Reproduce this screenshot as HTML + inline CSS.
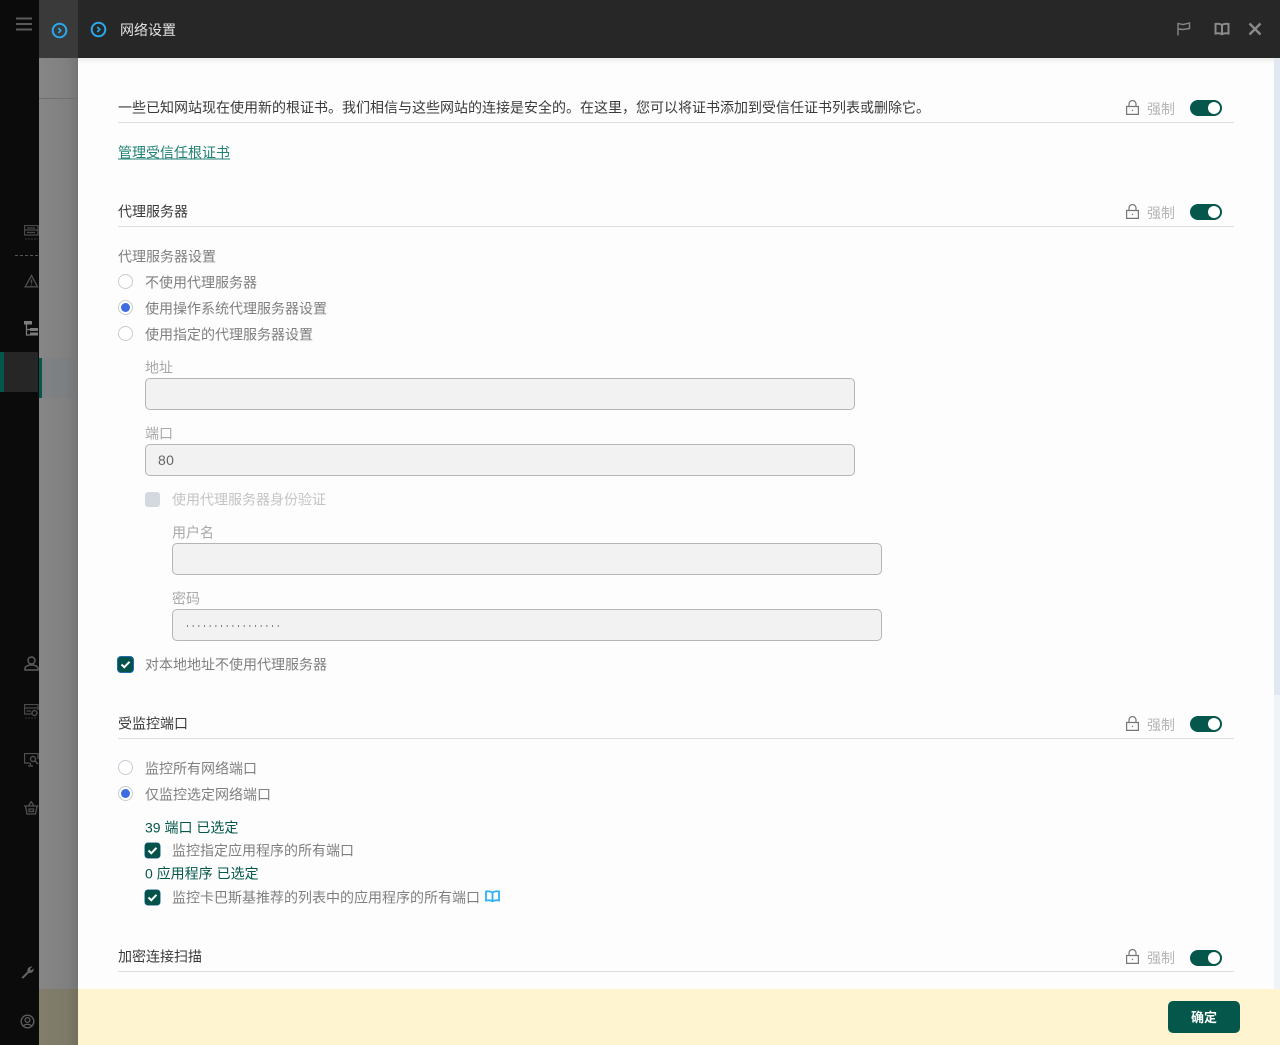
<!DOCTYPE html>
<html lang="zh-CN"><head><meta charset="utf-8"><title>网络设置</title>
<style>
html,body{margin:0;padding:0}
body{width:1280px;height:1045px;position:relative;overflow:hidden;background:#fdfdfd;font-family:"Liberation Sans","Noto Sans CJK SC",sans-serif;font-size:14px;color:#444}
.a,.t,.l,.i,.rb,.cb,svg{position:absolute}
.t{white-space:nowrap;line-height:20px;height:20px;transform:translateY(.5px);will-change:transform}
.t.k{transform:none;will-change:auto}
.h{color:#3a3a3a;left:118px}
.g{color:#7f7f7f}
.f{color:#a8a8a8}
.l{left:118px;width:1116px;height:1px;background:#dedede}
.i{height:30px;background:#f2f2f2;border:1px solid #b5b5b5;border-radius:5px}
.rb{left:118px;width:13px;height:13px;border:1px solid #c5ccd3;border-radius:50%;background:#fff}
.rb.on::after{content:"";position:absolute;left:2px;top:2px;width:9px;height:9px;border-radius:50%;background:#3d6be0}
.cb{width:15px;height:15px;border-radius:3px;background:#04534a;box-shadow:0 0 0 0.5px #1a5f9a}
.cb svg{left:2px;top:2px}
.tg{position:absolute;left:1190px;width:32px;height:16px;border-radius:8px;background:#04574a}
.tg::after{content:"";position:absolute;left:18px;top:2px;width:12px;height:12px;border-radius:50%;background:#fff}
.teal{color:#04574a}
</style></head><body>
<!-- sidebar -->
<div class="a" style="left:0;top:0;width:39px;height:1045px;background:#0b0b0b"></div>
<div class="a" style="left:0;top:352px;width:38px;height:40px;background:#262626"></div>
<div class="a" style="left:0;top:352px;width:4px;height:40px;background:#04574a"></div>
<!-- backdrop panel -->
<div class="a" style="left:39px;top:58px;width:39px;height:987px;background:linear-gradient(90deg,#868686,#808080 70%,#747474)"></div>
<div class="a" style="left:39px;top:98px;width:39px;height:1px;background:#6f6f6f"></div>
<div class="a" style="left:39px;top:358px;width:39px;height:40px;background:linear-gradient(90deg,#808385,#7c7f81 70%,#727476)"></div>
<div class="a" style="left:39px;top:358px;width:3px;height:40px;background:#04574a"></div>
<!-- header -->
<div class="a" style="left:0;top:0;width:39px;height:58px;background:#0b0b0b"></div>
<div class="a" style="left:39px;top:0;width:1241px;height:58px;background:#272727"></div>
<div class="a" style="left:39px;top:0;width:39px;height:58px;background:#3a3a3a"></div>
<div class="a" style="left:78px;top:58px;width:1196px;height:6px;background:linear-gradient(#ececec,#fdfdfd)"></div>
<!-- scrollbar -->
<div class="a" style="left:1274px;top:58px;width:6px;height:931px;background:#f0f3f7"></div>
<div class="a" style="left:1274px;top:58px;width:6px;height:637px;background:#e2e8f0"></div>

<svg style="left:15px;top:17px" width="18" height="14"><path d="M1 1.500H17M1 7H17M1 12.500H17" stroke="#5a5a5a" stroke-width="2"/></svg>
<svg style="left:51px;top:22px" width="17" height="17" viewBox="0 0 17 17" fill="none"><circle cx="8.500" cy="8.500" r="6.800" stroke="#29a8ec" stroke-width="2"/><path d="M7.300 6l2.500 2.500-2.500 2.500" stroke="#29a8ec" stroke-width="1.600"/></svg>
<svg style="left:90px;top:21px" width="17" height="17" viewBox="0 0 17 17" fill="none"><circle cx="8.500" cy="8.500" r="6.800" stroke="#29a8ec" stroke-width="2"/><path d="M7.300 6l2.500 2.500-2.500 2.500" stroke="#29a8ec" stroke-width="1.600"/></svg>
<div class="t k" style="left:120px;top:20px;color:#e2e2e2">网络设置</div>
<svg style="left:1176px;top:21px" width="16" height="16" viewBox="0 0 16 16" fill="none"><path d="M2 14.500V2.500L7 3.500L13.500 2V7.500L7 8.500L2 8" stroke="#868686" stroke-width="1.400"/></svg>
<svg style="left:1214px;top:22px" width="16" height="14" viewBox="0 0 16 14" fill="none"><path d="M8 3C6.500 2 4 1.500 1.500 2V11.500C4 11 6.500 11.300 8 12.300C9.500 11.300 12 11 14.500 11.500V2C12 1.500 9.500 2 8 3ZM8 3V12.300" stroke="#8a8a8a" stroke-width="2"/></svg>
<svg style="left:1248px;top:22px" width="14" height="14" viewBox="0 0 14 14"><path d="M1.500 1.500L12.500 12.500M12.500 1.500L1.500 12.500" stroke="#8a8a8a" stroke-width="2.400"/></svg>

<!-- sidebar icons -->
<svg style="left:24px;top:225px" width="15" height="16" viewBox="0 0 15 16" fill="none"><path d="M.5.500H14V10H.5ZM.5 5H14M3 3H11M3 7.500H11" stroke="#4a4a4a" stroke-width="1.300"/><path d="M1 14H14" stroke="#3a3a3a" stroke-dasharray="2 1"/></svg>
<div class="a" style="left:15px;top:255px;width:23px;border-top:1px dashed #555"></div>
<svg style="left:24px;top:274px" width="15" height="14" viewBox="0 0 15 14" fill="none"><path d="M7.500 1.500L13.500 12.800H1.200ZM7.500 5.500V9.500M7.500 10.500V11.500" stroke="#4c4c4c" stroke-width="1.400"/></svg>
<svg style="left:24px;top:321px" width="15" height="15" viewBox="0 0 15 15" fill="none"><path d="M0 0H8V3.500H0ZM6 7H14V10H6ZM6 11.500H14V14.500H6Z" fill="#7d7d7d"/><path d="M2.500 3.500V14H6M2.500 8.500H6" stroke="#7d7d7d" stroke-width="1.300"/></svg>
<svg style="left:24px;top:656px" width="15" height="15" viewBox="0 0 15 15" fill="none"><circle cx="7.500" cy="4.500" r="3.500" stroke="#5c5c5c" stroke-width="1.500"/><path d="M1 14V12C1 10.500 4 9.500 5.500 9H9.500C11 9.500 14 10.500 14 12V14Z" stroke="#5c5c5c" stroke-width="1.500"/></svg>
<svg style="left:24px;top:704px" width="15" height="15" viewBox="0 0 15 15" fill="none"><path d="M8 10H.5V.5H14V6M.5 4H14M2.500 7H7" stroke="#4a4a4a" stroke-width="1.200"/><circle cx="10.500" cy="9" r="2.500" stroke="#4a4a4a" stroke-width="1.500"/><path d="M1 14H13" stroke="#333" stroke-dasharray="2 1"/></svg>
<svg style="left:24px;top:753px" width="15" height="15" viewBox="0 0 15 15" fill="none"><path d="M6 10H.5V.5H14V6M4 13H9M6.500 10V13" stroke="#4f4f4f" stroke-width="1.300"/><circle cx="9" cy="6" r="2.500" stroke="#4f4f4f" stroke-width="1.500"/><path d="M11 8L14 11" stroke="#4f4f4f" stroke-width="1.500"/></svg>
<svg style="left:24px;top:801px" width="15" height="14" viewBox="0 0 15 14" fill="none"><path d="M0 5H14.500M1.500 5L3 13H11.500L13 5M4.500 5L7.200 .5L10 5M5 8H9.500V10.500H5Z" stroke="#505050" stroke-width="1.300"/></svg>
<svg style="left:20px;top:964px" width="15" height="15" viewBox="0 0 15 15"><path d="M1.500 13.500L7.500 7.500C6.800 5 8.800 2 12.500 2.500L10 5L11 6.500L13.800 4.500C14 8 11 9.500 9 8.800L3 14.800Z" fill="#666"/></svg>
<svg style="left:20px;top:1014px" width="15" height="15" viewBox="0 0 15 15" fill="none"><circle cx="7.500" cy="7.500" r="6.300" stroke="#5c5c5c" stroke-width="1.400"/><circle cx="7.500" cy="6" r="2.400" stroke="#5c5c5c" stroke-width="1.300"/><path d="M3.500 12C4.500 9.800 10.500 9.800 11.500 12" stroke="#5c5c5c" stroke-width="1.300"/></svg>

<!-- section 1 -->
<div class="t h" style="top:97px">一些已知网站现在使用新的根证书。我们相信与这些网站的连接是安全的。在这里，您可以将证书添加到受信任证书列表或删除它。</div>
<div class="l" style="top:122px"></div>
<div class="t" style="left:118px;top:142px;color:#1f8073;text-decoration:underline">管理受信任根证书</div>

<!-- section 2 -->
<div class="t h" style="top:201px">代理服务器</div>
<div class="l" style="top:226px"></div>
<div class="t g" style="left:118px;top:246px">代理服务器设置</div>
<div class="rb" style="top:274px"></div><div class="t g" style="left:145px;top:272px">不使用代理服务器</div>
<div class="rb on" style="top:300px"></div><div class="t g" style="left:145px;top:298px">使用操作系统代理服务器设置</div>
<div class="rb" style="top:326px"></div><div class="t g" style="left:145px;top:324px">使用指定的代理服务器设置</div>
<div class="t f" style="left:145px;top:357px">地址</div>
<div class="i" style="left:145px;top:378px;width:708px"></div>
<div class="t f" style="left:145px;top:423px">端口</div>
<div class="i" style="left:145px;top:444px;width:708px"></div>
<div class="t k" style="left:158px;top:450px;color:#666;letter-spacing:.4px">80</div>
<div class="a" style="left:145px;top:492px;width:15px;height:15px;border-radius:3px;background:#d3d9de"></div>
<div class="t" style="left:172px;top:489px;color:#c4c4c4">使用代理服务器身份验证</div>
<div class="t f" style="left:172px;top:522px">用户名</div>
<div class="i" style="left:172px;top:543px;width:708px"></div>
<div class="t f" style="left:172px;top:588px">密码</div>
<div class="i" style="left:172px;top:609px;width:708px"></div>
<svg style="left:186px;top:625px" width="94" height="3"><path d="M1 1H93" stroke="#555" stroke-width="1.400" stroke-dasharray="1 4.670"/></svg>
<div class="cb" style="left:118px;top:657px;box-shadow:0 0 0 1px #1f6ab0"><svg width="11" height="11" viewBox="0 0 11 11" fill="none"><path d="M1.500 5.500L4.300 8.200L9.500 2.800" stroke="#fff" stroke-width="2"/></svg></div>
<div class="t g" style="left:145px;top:654px">对本地地址不使用代理服务器</div>

<!-- section 3 -->
<div class="t h" style="top:713px">受监控端口</div>
<div class="l" style="top:738px"></div>
<div class="rb" style="top:760px"></div><div class="t g" style="left:145px;top:758px">监控所有网络端口</div>
<div class="rb on" style="top:786px"></div><div class="t g" style="left:145px;top:784px">仅监控选定网络端口</div>
<div class="t teal" style="left:145px;top:817px">39 端口 已选定</div>
<div class="cb" style="left:145px;top:843px"><svg width="11" height="11" viewBox="0 0 11 11" fill="none"><path d="M1.500 5.500L4.300 8.200L9.500 2.800" stroke="#fff" stroke-width="2"/></svg></div>
<div class="t g" style="left:172px;top:840px">监控指定应用程序的所有端口</div>
<div class="t teal" style="left:145px;top:863px">0 应用程序 已选定</div>
<div class="cb" style="left:145px;top:890px"><svg width="11" height="11" viewBox="0 0 11 11" fill="none"><path d="M1.500 5.500L4.300 8.200L9.500 2.800" stroke="#fff" stroke-width="2"/></svg></div>
<div class="t g" style="left:172px;top:887px">监控卡巴斯基推荐的列表中的应用程序的所有端口</div>
<svg style="left:485px;top:890px" width="15" height="13" viewBox="0 0 15 13" fill="none"><path d="M7.500 2.500C6 1.500 3.500 1 1 1.500V10.500C3.500 10 6 10.300 7.500 11.300C9 10.300 11.500 10 14 10.500V1.500C11.500 1 9 1.500 7.500 2.500ZM7.500 2.500V11.300" stroke="#2db0f0" stroke-width="1.800"/></svg>

<!-- section 4 -->
<div class="t h" style="top:946px">加密连接扫描</div>
<div class="l" style="top:971px"></div>

<!-- lock rows -->
<svg style="left:1126px;top:100px" width="13" height="15" viewBox="0 0 13 15" fill="none"><path d="M.6 6.500H12.400V14.400H.6ZM3 6.500V4A3.500 3.500 0 0 1 10 4V6.500" stroke="#777" stroke-width="1.200"/><circle cx="6.500" cy="10.500" r=".7" fill="#777"/></svg>
<div class="t k" style="left:1147px;top:99px;color:#b5b5b5">强制</div><div class="tg" style="top:100px"></div>
<svg style="left:1126px;top:204px" width="13" height="15" viewBox="0 0 13 15" fill="none"><path d="M.6 6.500H12.400V14.400H.6ZM3 6.500V4A3.500 3.500 0 0 1 10 4V6.500" stroke="#777" stroke-width="1.200"/><circle cx="6.500" cy="10.500" r=".7" fill="#777"/></svg>
<div class="t k" style="left:1147px;top:203px;color:#b5b5b5">强制</div><div class="tg" style="top:204px"></div>
<svg style="left:1126px;top:716px" width="13" height="15" viewBox="0 0 13 15" fill="none"><path d="M.6 6.500H12.400V14.400H.6ZM3 6.500V4A3.500 3.500 0 0 1 10 4V6.500" stroke="#777" stroke-width="1.200"/><circle cx="6.500" cy="10.500" r=".7" fill="#777"/></svg>
<div class="t k" style="left:1147px;top:715px;color:#b5b5b5">强制</div><div class="tg" style="top:716px"></div>
<svg style="left:1126px;top:949px" width="13" height="15" viewBox="0 0 13 15" fill="none"><path d="M.6 6.500H12.400V14.400H.6ZM3 6.500V4A3.500 3.500 0 0 1 10 4V6.500" stroke="#777" stroke-width="1.200"/><circle cx="6.500" cy="10.500" r=".7" fill="#777"/></svg>
<div class="t k" style="left:1147px;top:948px;color:#b5b5b5">强制</div><div class="tg" style="top:950px"></div>

<!-- footer -->
<div class="a" style="left:78px;top:989px;width:1202px;height:56px;background:#fef5d0"></div>
<div class="a" style="left:39px;top:989px;width:39px;height:56px;background:linear-gradient(90deg,#827e6b,#7e7a68 70%,#74705f)"></div>
<div class="a" style="left:1168px;top:1001px;width:72px;height:32px;border-radius:5px;background:#04574a;color:#fff;text-align:center;line-height:33px;font-weight:700;font-size:13px">确定</div>
</body></html>
